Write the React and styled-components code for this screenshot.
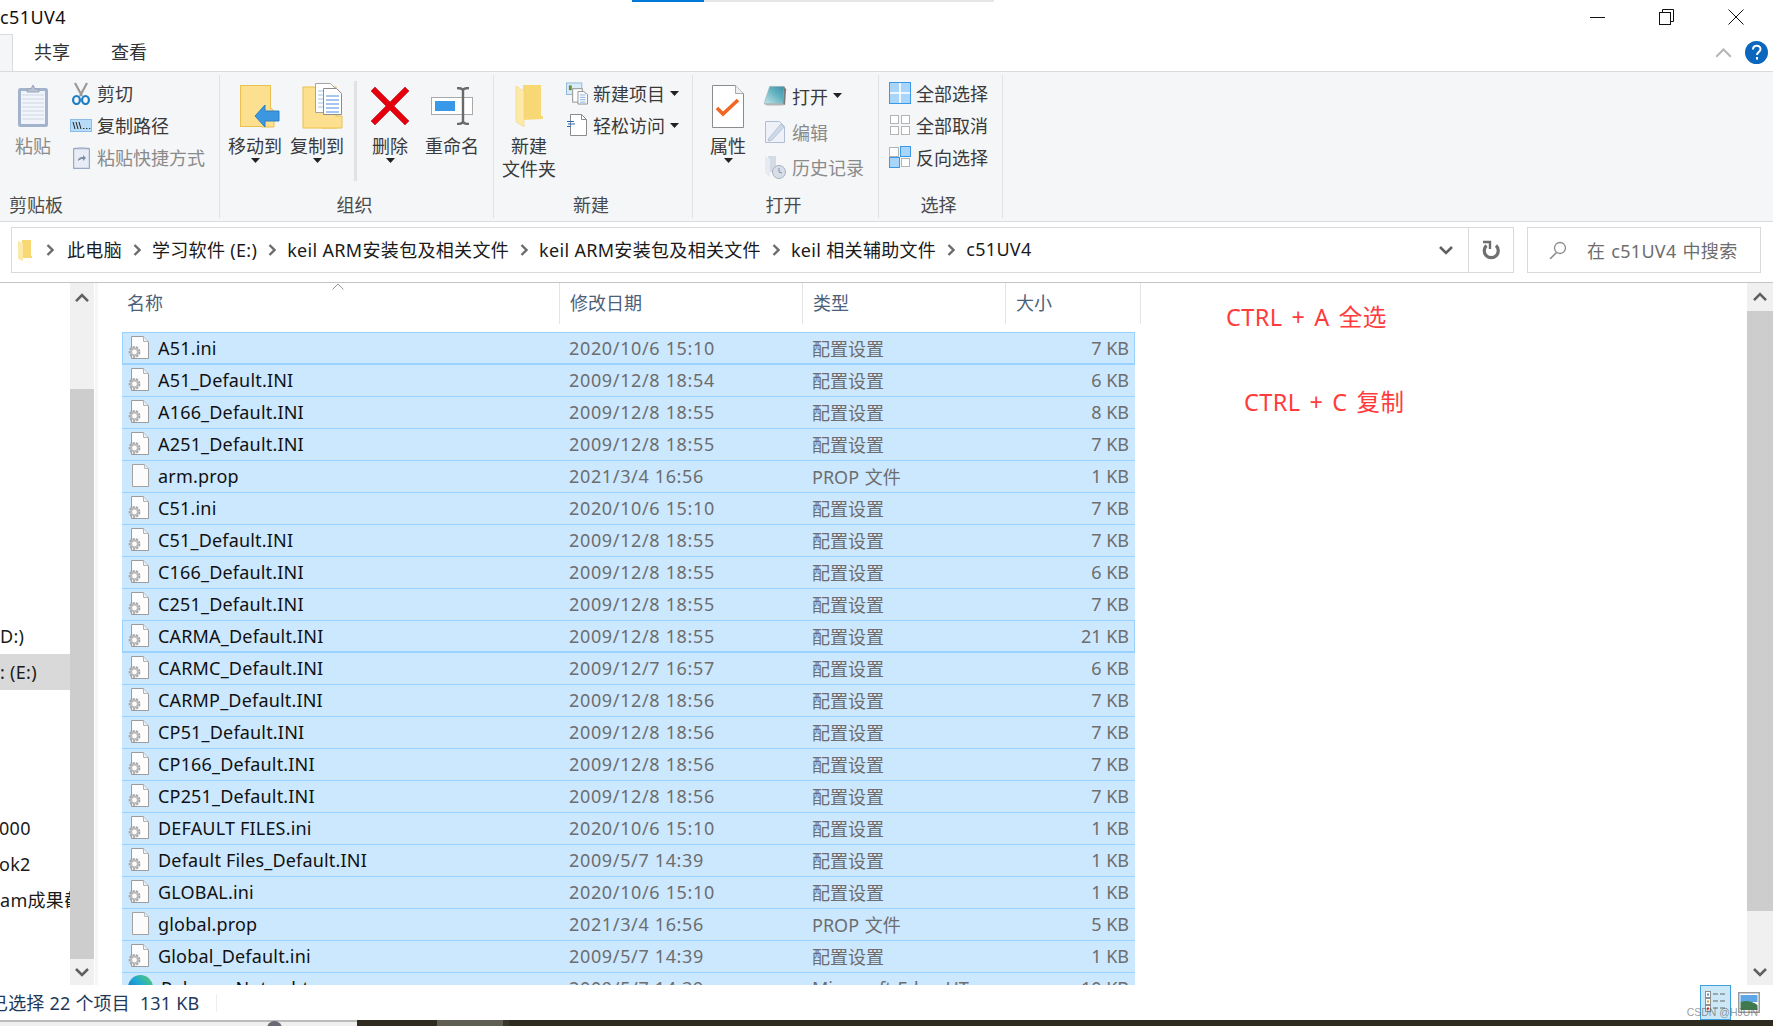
import React from 'react';
import styled, { createGlobalStyle } from 'styled-components';

const GlobalStyle = createGlobalStyle`
    html, body {
        margin: 0;
        padding: 0;
        background: #fff;
    }
    body {
        font-family: "Noto Sans", "Noto Sans CJK SC", sans-serif;
        font-size: 18px;
        color: #222;
    }
`;

const Page = styled.div`
    width: 1773px;
    height: 1026px;
    overflow: hidden;
    display: flex;
    flex-direction: column;
    position: relative;
    background: #fff;
`;

/* title bar */
const TitleBar = styled.div`
    height: 34px;
    display: flex;
    align-items: center;
    flex-shrink: 0;
`;
const TitleText = styled.div`
    font-size: 18px;
    color: #111;
    letter-spacing: 0.4px;
`;
const Progress = styled.div`
    position: absolute;
    top: 0;
    left: 632px;
    width: 362px;
    height: 2px;
    background: linear-gradient(to right, #0078d7 72px, #e6e6e6 72px);
`;
const WindowControls = styled.div`
    margin-left: auto;
    padding-right: 3px;
    display: flex;
`;
const WindowButton = styled.div`
    width: 69px;
    height: 34px;
    display: flex;
    align-items: center;
    justify-content: center;
`;

/* tabs */
const TabRow = styled.div`
    height: 38px;
    display: flex;
    align-items: center;
    flex-shrink: 0;
    border-bottom: 1px solid #dadbdc;
    box-sizing: border-box;
`;
const FileTab = styled.div`
    width: 13px;
    height: 37px;
    box-sizing: border-box;
    background: #f5f6f7;
    border-top: 1px solid #dadbdc;
    border-right: 1px solid #dadbdc;
`;
const Tab = styled.div`
    margin-left: ${(p) => p.$left}px;
    margin-top: -4px;
    color: #333;
`;
const TabTools = styled.div`
    margin-left: auto;
    padding-right: 5px;
    display: flex;
    align-items: center;
    gap: 13px;
`;

/* ribbon */
const Ribbon = styled.div`
    height: 150px;
    flex-shrink: 0;
    display: flex;
    background: #f5f6f7;
    border-bottom: 1px solid #dadbdc;
    box-sizing: border-box;
    padding-top: 3px;
`;
const Group = styled.div`
    width: ${(p) => p.$w}px;
    height: 143px;
    box-sizing: border-box;
    border-right: 1px solid #e1e2e3;
    display: flex;
    flex-direction: column;
`;
const GroupBody = styled.div`
    height: 117px;
    padding-top: 2px;
    padding-left: ${(p) => p.$pad || 0}px;
    box-sizing: border-box;
    display: flex;
`;
const GroupLabel = styled.div`
    height: 26px;
    line-height: 26px;
    color: #4a4a4a;
    text-align: ${(p) => (p.$start ? 'left' : 'center')};
    padding-left: ${(p) => (p.$start ? 9 : 0)}px;
    padding-right: ${(p) => (p.$start ? 0 : 4)}px;
`;
const LargeButton = styled.div`
    width: ${(p) => p.$w || 54}px;
    margin-left: ${(p) => p.$left || 0}px;
    display: flex;
    flex-direction: column;
    align-items: center;
    flex-shrink: 0;
`;
const LargeIcon = styled.div`
    height: 58px;
    padding-left: ${(p) => p.$nudge || 0}px;
    display: flex;
    align-items: center;
    justify-content: center;
`;
const LargeLabel = styled.div`
    line-height: 23px;
    text-align: center;
    color: ${(p) => (p.$off ? '#8a8a8a' : '#3a3a3a')};
    white-space: pre-line;
`;
const CaretBox = styled.div`
    height: 6px;
    display: flex;
    justify-content: center;
`;
const Separator = styled.div`
    width: 3px;
    height: 100px;
    margin: 4px 0 0 ${(p) => p.$left}px;
    background: #e1e2e3;
    flex-shrink: 0;
`;
const SmallColumn = styled.div`
    margin-left: ${(p) => p.$left || 0}px;
    display: flex;
    flex-direction: column;
`;
const SmallRow = styled.div`
    height: ${(p) => p.$h || 32}px;
    display: flex;
    align-items: center;
    gap: 5px;
    color: ${(p) => (p.$off ? '#8a8a8a' : '#3a3a3a')};
    white-space: nowrap;
`;
const SmallIcon = styled.div`
    width: ${(p) => p.$w || 22}px;
    display: flex;
    justify-content: center;
    align-items: center;
`;
const InlineCaret = styled.div`
    margin-left: 0;
    display: flex;
`;

/* address row */
const AddressRow = styled.div`
    height: 61px;
    flex-shrink: 0;
    box-sizing: border-box;
    padding: 5px 12px 9px 11px;
    display: flex;
    gap: 13px;
    border-bottom: 1px solid #c4c4c4;
`;
const AddressBox = styled.div`
    flex: 1;
    display: flex;
    align-items: center;
    border: 1px solid #d9d9d9;
    padding-left: 6px;
    min-width: 0;
`;
const CrumbSep = styled.div`
    width: ${(p) => p.$w || 30}px;
    display: flex;
    justify-content: center;
    flex-shrink: 0;
`;
const Crumb = styled.div`
    white-space: nowrap;
    color: #1a1a1a;
    margin-top: -2px;
    letter-spacing: 0.32px;
`;
const HistoryDrop = styled.div`
    margin-left: auto;
    width: 44px;
    display: flex;
    justify-content: center;
`;
const RefreshBox = styled.div`
    width: 45px;
    box-sizing: border-box;
    align-self: stretch;
    border-left: 1px solid #d9d9d9;
    display: flex;
    align-items: center;
    justify-content: center;
`;
const SearchBox = styled.div`
    width: 234px;
    flex-shrink: 0;
    box-sizing: border-box;
    border: 1px solid #d9d9d9;
    padding-left: 21px;
    display: flex;
    align-items: center;
    gap: 20px;
    color: #6d6d6d;
    white-space: nowrap;
    letter-spacing: 0.3px;
    word-spacing: 1px;
`;

/* main part */
const Main = styled.div`
    height: 702px;
    flex-shrink: 0;
    display: flex;
    overflow: hidden;
`;
const Nav = styled.div`
    width: 70px;
    flex-shrink: 0;
    overflow: hidden;
    display: flex;
    flex-direction: column;
    padding-top: 335px;
    box-sizing: border-box;
`;
const NavItem = styled.div`
    height: 36px;
    line-height: 36px;
    white-space: nowrap;
    overflow: hidden;
    color: #1a1a1a;
    letter-spacing: 0.3px;
    text-indent: ${(p) => p.$shift || 0}px;
    background: ${(p) => (p.$on ? '#d9d9d9' : 'transparent')};
    margin-top: ${(p) => p.$top || 0}px;
`;
const Scrollbar = styled.div`
    width: ${(p) => p.$w}px;
    flex-shrink: 0;
    background: #f0f0f0;
    display: flex;
    flex-direction: column;
`;
const ScrollArrow = styled.div`
    height: ${(p) => p.$h}px;
    display: flex;
    align-items: center;
    justify-content: center;
    flex-shrink: 0;
`;
const ScrollEnd = styled(ScrollArrow)`
    align-items: flex-end;
    padding-bottom: 8px;
    box-sizing: border-box;
`;
const ScrollThumb = styled.div`
    background: #cdcdcd;
    height: ${(p) => p.$h}px;
    margin-top: ${(p) => p.$top || 0}px;
    flex-shrink: 0;
`;
const NavGap = styled.div`
    width: 4px;
    flex-shrink: 0;
    background: linear-gradient(to right, #fff 1px, #f6f6f6 1px);
`;
const ListPane = styled.div`
    flex: 1;
    position: relative;
    overflow: hidden;
    padding-left: 24px;
`;
const HeaderRow = styled.div`
    height: 39px;
    width: 1019px;
    display: grid;
    grid-template-columns: 438px 243px 203px 135px;
    color: #4c607a;
    margin-bottom: 10px;
`;
const HeaderCell = styled.div`
    border-right: 1px solid #e5e5e5;
    padding-left: ${(p) => p.$pad}px;
    line-height: 41px;
    box-sizing: border-box;
`;
const SortMark = styled.div`
    position: absolute;
    left: 234px;
    top: 0;
    display: flex;
`;
const FileRow = styled.div`
    height: 32px;
    width: 1013px;
    box-sizing: border-box;
    padding-bottom: 2px;
    display: grid;
    grid-template-columns: 437px 243px 203px 130px;
    align-items: center;
    background: #cce8ff;
    border-top: 1px solid #99d1ff;
    ${(p) => p.$focus && 'outline: 1px solid #99d1ff; outline-offset: -1px;'}
    color: #6d6d6d;
`;
const NameCell = styled.div`
    display: flex;
    align-items: center;
    gap: 8px;
    padding-left: 6px;
    color: #111;
    white-space: nowrap;
    letter-spacing: 0.18px;
`;
const MetaCell = styled.div`
    padding-left: 10px;
    white-space: nowrap;
    word-spacing: 1px;
`;
const DateCell = styled(MetaCell)`
    letter-spacing: 0.65px;
    word-spacing: 0;
`;
const SizeCell = styled.div`
    text-align: right;
    padding-right: 6px;
`;
const Note = styled.div`
    position: absolute;
    left: ${(p) => p.$x}px;
    top: ${(p) => p.$y}px;
    color: #ff3b3b;
    font-size: 23.5px;
    line-height: 32px;
    white-space: nowrap;
    letter-spacing: 0.4px;
    word-spacing: 2.5px;
`;

/* status bar */
const StatusBar = styled.div`
    height: 35px;
    flex-shrink: 0;
    display: flex;
    align-items: center;
    position: relative;
    color: #1e395b;
`;
const StatusText = styled.div`
    margin-left: -10px;
    white-space: pre;
    width: 226px;
    flex-shrink: 0;
    letter-spacing: 0.15px;
    word-spacing: 0.2px;
    margin-top: -2px;
`;
const StatusDivider = styled.div`
    width: 1px;
    height: 18px;
    background: #eeeeee;
`;
const ViewButtons = styled.div`
    margin-left: auto;
    margin-right: 13px;
    display: flex;
    align-items: center;
    gap: 7px;
    align-self: stretch;
`;
const ViewButton = styled.div`
    width: ${(p) => p.$w}px;
    box-sizing: border-box;
    align-self: stretch;
    display: flex;
    align-items: center;
    justify-content: center;
    ${(p) => p.$on && 'background: #cce8f7; border: 1px solid #3ea0e0;'}
`;
const Watermark = styled.div`
    position: absolute;
    right: 15px;
    bottom: 0;
    font-family: "Liberation Sans", sans-serif;
    font-size: 10.5px;
    line-height: 16px;
    color: rgba(90, 90, 90, 0.62);
    white-space: nowrap;
`;

/* strip of what lies behind the window */
const BackStrip = styled.div`
    height: 6px;
    flex-shrink: 0;
    display: flex;
    background: #2e2b20;
`;
const StripLight = styled.div`
    width: 357px;
    box-sizing: border-box;
    border-top: 2px solid #bcbcbc;
    background: #efefef;
    position: relative;
`;
const StripDot = styled.div`
    position: absolute;
    left: 267px;
    top: -1px;
    width: 15px;
    height: 15px;
    border-radius: 50%;
    background: #6b6873;
`;
const StripPart = styled.div`
    width: ${(p) => p.$w}px;
    background: ${(p) => p.$c};
`;

/* small drawings */
const Caret = () => (
    <svg width="9" height="5" viewBox="0 0 9 5"><path d="M0 0h9L4.5 5z" fill="#222" /></svg>
);

const Chevron = ({ color = '#6b6b6b' }) => (
    <svg width="8" height="12" viewBox="0 0 8 12">
        <path d="M1.5 1l5 5-5 5" fill="none" stroke={color} strokeWidth="2.4" />
    </svg>
);

const UpChevron = ({ w = 14, color = '#606060', sw = 2.6 }) => (
    <svg width={w} height={w * 0.65} viewBox="0 0 14 9">
        <path d="M1 8l6-6 6 6" fill="none" stroke={color} strokeWidth={sw} />
    </svg>
);

const DownChevron = () => (
    <svg width="14" height="9" viewBox="0 0 14 9">
        <path d="M1 1l6 6 6-6" fill="none" stroke="#606060" strokeWidth="2.6" />
    </svg>
);

const ClipboardIcon = () => (
    <svg width="32" height="44" viewBox="0 0 32 44">
        <rect x="1" y="4" width="30" height="39" rx="2.5" fill="#a3b3cc" />
        <rect x="4" y="7" width="24" height="33" fill="#f1f4fa" />
        {[11, 15, 19, 23, 27, 31, 35].map((y) => (
            <path key={y} d={`M5 ${y}h22`} stroke="#cfd7e6" strokeWidth="1" />
        ))}
        <path d="M10 8V5h4l2-4 2 4h4v3z" fill="#b9c3d4" stroke="#99a5ba" />
    </svg>
);

const ScissorsIcon = () => (
    <svg width="18" height="23" viewBox="0 0 18 23">
        <path d="M3 1l7 13M15 1L8 14" stroke="#9a9a9a" strokeWidth="2.2" fill="none" />
        <ellipse cx="4.5" cy="18" rx="3.4" ry="4" fill="none" stroke="#1c7cc4" strokeWidth="2.2" />
        <ellipse cx="13.5" cy="18" rx="3.4" ry="4" fill="none" stroke="#1c7cc4" strokeWidth="2.2" />
    </svg>
);

const CopyPathIcon = () => (
    <svg width="22" height="13" viewBox="0 0 22 13">
        <rect x="0.5" y="0.5" width="21" height="12" fill="#b6dcf8" stroke="#8dbde6" />
        <path d="M3 3l2 7M6 3l2 7M9 3l2 7" stroke="#222" strokeWidth="1" />
        <path d="M13 9.5h1.4M16 9.5h1.4M19 9.5h1.2" stroke="#333" strokeWidth="1.2" />
    </svg>
);

const PasteShortcutIcon = () => (
    <svg width="17" height="23" viewBox="0 0 17 23">
        <rect x="0.5" y="2.5" width="16" height="20" rx="1" fill="#e8edf5" stroke="#9aa9c2" strokeWidth="1.4" />
        <path d="M5 3V1.5h7V3z" fill="#a9b5c9" />
        <path d="M5 15c0-3 2-4 5-4V9l3 3-3 3v-2c-2 0-3 .6-5 2z" fill="#7e8ba3" />
    </svg>
);

const MoveToIcon = () => (
    <svg width="40" height="43" viewBox="0 0 40 43">
        <rect x="0.5" y="0.5" width="30" height="41" fill="#fde08f" stroke="#eac04e" />
        <path d="M31 23l3 3v16H22" fill="#fde08f" stroke="#eac04e" />
        <path d="M15 31l10-11v6h14v10H25v6z" fill="#3b97e0" stroke="#2b7fc4" />
    </svg>
);

const CopyToIcon = () => (
    <svg width="41" height="46" viewBox="0 0 41 46">
        <rect x="1" y="4" width="33" height="41" fill="#fde08f" stroke="#eac04e" />
        <path d="M34 33h6v12H20" fill="#fde08f" stroke="#eac04e" />
        <path d="M13.5 0.5h15l5 5v24h-20z" fill="#fff" stroke="#a5a5a5" />
        <path d="M16 8h11M16 12h11M16 16h11M16 20h11M16 24h11" stroke="#9cc1ea" />
        <path d="M21.5 5.5h13l5 5v21h-18z" fill="#fff" stroke="#8c8c8c" />
        <path d="M24 13h13M24 17h13M24 21h13M24 25h13M24 29h13" stroke="#4f8ee0" />
    </svg>
);

const DeleteIcon = () => (
    <svg width="38" height="38" viewBox="0 0 38 38">
        <path d="M4 0L19 15 34 0l4 4-15 15 15 15-4 4-15-15L4 38l-4-4 15-15L0 4z" fill="#e6000d" stroke="#b0161d" strokeWidth="0.6" />
    </svg>
);

const RenameIcon = () => (
    <svg width="42" height="38" viewBox="0 0 42 38">
        <rect x="0.5" y="10.5" width="41" height="17" fill="#fff" stroke="#a9a9a9" />
        <rect x="4" y="14" width="20" height="10" fill="#3a98e8" />
        <path d="M32 3v32M26 1c4 0 6 1 6 3 0-2 2-3 6-3M26 37c4 0 6-1 6-3 0 2 2 3 6 3" fill="none" stroke="#6a6a6a" strokeWidth="2.4" />
    </svg>
);

const NewFolderIcon = () => (
    <svg width="28" height="42" viewBox="0 0 28 42">
        <path d="M8 0h18v31h2v3l-20 1z" fill="#f8d775" />
        <path d="M1 1l8 5v36l-8-5z" fill="#fde9a8" stroke="#efd58a" strokeWidth="0.6" />
    </svg>
);

const AddressFolderIcon = () => (
    <svg width="14" height="21" viewBox="0 0 14 21">
        <path d="M4 0h9v16h1v2H4z" fill="#f8d775" />
        <path d="M0 1l5 2v18l-5-2z" fill="#fde9a8" />
    </svg>
);

const NewItemIcon = () => (
    <svg width="23" height="23" viewBox="0 0 23 23">
        <rect x="0.5" y="0.5" width="16" height="12" fill="#d8ecfa" stroke="#8fb6d6" />
        <rect x="3" y="3" width="3" height="5" fill="#6d8a3c" />
        <rect x="7" y="6.5" width="10" height="14" fill="#fff" stroke="#8f8f8f" />
        <path d="M12.5 9.5h6l4 3v10h-10z" fill="#fff" stroke="#8f8f8f" />
        <path d="M14.5 13h6M14.5 15.5h6M14.5 18h6M14.5 20.5h6" stroke="#7cb0e4" />
    </svg>
);

const EasyAccessIcon = () => (
    <svg width="20" height="22" viewBox="0 0 20 22">
        <path d="M3.5 0.5h11l5 5v16h-16z" fill="#fff" stroke="#8c8c8c" />
        <path d="M14.5 0.5v5h5" fill="none" stroke="#8c8c8c" />
        <path d="M0 7.5h7M1 10h7M0 12.5h4" stroke="#2a6ab0" />
    </svg>
);

const PropertiesIcon = () => (
    <svg width="32" height="43" viewBox="0 0 32 43">
        <path d="M0.5 0.5h23l8 8v34h-31z" fill="#fff" stroke="#8c8c8c" />
        <path d="M23.5 0.5v8h8" fill="#eee" stroke="#aaa" />
        <path d="M5 23l6 6L26 15" fill="none" stroke="#f26522" strokeWidth="3.6" />
    </svg>
);

const NotepadIcon = () => (
    <svg width="24" height="22" viewBox="0 0 24 22">
        <defs>
            <linearGradient id="padFill" x1="0" y1="1" x2="1" y2="0">
                <stop offset="0" stopColor="#c8e6ea" />
                <stop offset="0.6" stopColor="#5fb0bf" />
                <stop offset="1" stopColor="#3f8fa3" />
            </linearGradient>
        </defs>
        <path d="M6 1h15l-1 18H0z" fill="url(#padFill)" stroke="#8fa9ad" strokeWidth="0.6" />
        <path d="M21 1l2 3-1 16h-2z" fill="#7a7a7a" />
        <path d="M0 19h20v2H3z" fill="#b5b5b5" />
    </svg>
);

const EditIcon = () => (
    <svg width="21" height="23" viewBox="0 0 21 23">
        <path d="M0.5 1.5h14l5 5v16h-19z" fill="#eef2f8" stroke="#b0bfd6" />
        <path d="M4 18L16 4l3 3L7 20l-4 1z" fill="#cdd8e8" stroke="#a9b8cf" strokeWidth="0.7" />
    </svg>
);

const HistoryIcon = () => (
    <svg width="23" height="23" viewBox="0 0 23 23">
        <path d="M4 0h8v16H5z" fill="#d4dbe6" />
        <path d="M1 0l5 3v18l-5-4z" fill="#e6ebf2" />
        <circle cx="15" cy="16" r="6.5" fill="#d8dee8" stroke="#a7b1c1" />
        <path d="M15 12v4l3 1" fill="none" stroke="#8590a3" />
    </svg>
);

const SelectAllIcon = () => (
    <svg width="22" height="22" viewBox="0 0 22 22">
        <rect x="0.5" y="0.5" width="21" height="21" fill="#a9d5fb" stroke="#3a98e8" />
        <path d="M11 0v22M0 11h22" stroke="#fff" strokeWidth="1.6" />
        <rect x="0.5" y="0.5" width="21" height="21" fill="none" stroke="#3a98e8" />
    </svg>
);

const SelectNoneIcon = () => (
    <svg width="20" height="20" viewBox="0 0 20 20">
        <g fill="#fff" stroke="#b4b4b4">
            <rect x="0.5" y="0.5" width="8" height="8" />
            <rect x="11.5" y="0.5" width="8" height="8" />
            <rect x="0.5" y="11.5" width="8" height="8" />
            <rect x="11.5" y="11.5" width="8" height="8" />
        </g>
    </svg>
);

const InvertIcon = () => (
    <svg width="22" height="22" viewBox="0 0 22 22">
        <rect x="0.5" y="1.5" width="9" height="9" fill="#fff" stroke="#b4b4b4" />
        <rect x="11.5" y="0.5" width="10" height="10" fill="#a9d5fb" stroke="#3a98e8" />
        <rect x="0.5" y="11.5" width="10" height="10" fill="#a9d5fb" stroke="#3a98e8" />
        <rect x="12.5" y="12.5" width="8" height="8" fill="#fff" stroke="#b4b4b4" />
    </svg>
);

const RefreshIcon = () => (
    <svg width="18" height="21" viewBox="0 0 18 21">
        <path d="M4.5 5.5a7 7 0 1 0 9.5 0" fill="none" stroke="#6f6f6f" strokeWidth="3.2" />
        <path d="M1 2h7v7" fill="none" stroke="#6f6f6f" strokeWidth="2.4" />
    </svg>
);

const SearchIcon = () => (
    <svg width="18" height="18" viewBox="0 0 18 18">
        <circle cx="11" cy="7" r="5.5" fill="none" stroke="#8a8a8a" strokeWidth="1.3" />
        <path d="M7.5 11.5L1 18" stroke="#8a8a8a" strokeWidth="1.5" />
    </svg>
);

const IniIcon = () => (
    <svg width="22" height="24" viewBox="0 0 22 24">
        <path d="M3.5 0.5h12l5 5v17h-17z" fill="#fdfdfd" stroke="#9c9c9c" />
        <path d="M15.5 0.5v5h5" fill="#eee" stroke="#b4b4b4" />
        <circle cx="6.5" cy="16" r="4.6" fill="none" stroke="#a7a7a7" strokeWidth="2.6" strokeDasharray="2.2 1" />
        <circle cx="6.5" cy="16" r="3.4" fill="none" stroke="#b9b9b9" strokeWidth="2" />
    </svg>
);

const BlankIcon = () => (
    <svg width="22" height="24" viewBox="0 0 22 24">
        <path d="M4.5 0.5h12l4 4v18h-16z" fill="#fbfbfb" stroke="#a2a2a2" />
        <path d="M16.5 0.5v4h4" fill="#eee" stroke="#bcbcbc" />
    </svg>
);

const EdgeIcon = () => (
    <svg width="25" height="25" viewBox="0 0 25 25">
        <defs>
            <linearGradient id="edgeFill" x1="0" y1="1" x2="1" y2="0">
                <stop offset="0" stopColor="#0c59a4" />
                <stop offset="0.55" stopColor="#1fa9d8" />
                <stop offset="1" stopColor="#5ed05a" />
            </linearGradient>
        </defs>
        <circle cx="12.5" cy="12.5" r="12.5" fill="url(#edgeFill)" />
    </svg>
);

const DetailsViewIcon = () => (
    <svg width="21" height="24" viewBox="0 0 21 24">
        <g stroke="#8f8f8f" fill="#fff">
            <rect x="0.5" y="0.5" width="5" height="6" />
            <rect x="0.5" y="7.5" width="5" height="6" />
            <rect x="0.5" y="14.5" width="5" height="6" />
        </g>
        <rect x="2" y="2.5" width="2" height="2" fill="#4c8fc9" />
        <rect x="2" y="9.5" width="2" height="2" fill="#c9a044" />
        <rect x="2" y="16.5" width="2" height="2" fill="#c8271e" />
        <path d="M8 3h5M15 3h5M8 10h5M15 10h5M8 17h5M15 17h5" stroke="#666" />
    </svg>
);

const PreviewViewIcon = () => (
    <svg width="22" height="21" viewBox="0 0 22 21">
        <rect x="0.75" y="0.75" width="20.5" height="19.5" fill="#fff" stroke="#9a9a9a" strokeWidth="1.5" />
        <rect x="2.5" y="3" width="17" height="7" fill="#5fa6e6" />
        <path d="M2.5 10c6-2 11-1 17 3v5h-17z" fill="#3f7a4f" />
    </svg>
);

const WinMinimize = () => (
    <svg width="15" height="3" viewBox="0 0 15 3"><path d="M0 1.5h15" stroke="#111" /></svg>
);
const WinRestore = () => (
    <svg width="15" height="16" viewBox="0 0 15 16">
        <path d="M3.5 3V0.5h11v12H12" fill="none" stroke="#111" />
        <rect x="0.5" y="3.5" width="11" height="12" fill="#fff" stroke="#111" />
    </svg>
);
const WinClose = () => (
    <svg width="16" height="16" viewBox="0 0 16 16"><path d="M0.5 0.5l15 15M15.5 0.5l-15 15" stroke="#111" /></svg>
);

const HelpIcon = () => (
    <svg width="23" height="23" viewBox="0 0 23 23">
        <circle cx="11.5" cy="11.5" r="11.5" fill="#0b66bd" />
        <path d="M8 8.5c0-5 7.5-5 7.5-.5 0 3-3.5 3-3.5 6" fill="none" stroke="#fff" strokeWidth="2" />
        <rect x="11" y="16" width="2" height="2.6" fill="#fff" />
    </svg>
);

const SortUp = () => (
    <svg width="12" height="7" viewBox="0 0 12 7"><path d="M0.5 6.5L6 1l5.5 5.5" fill="none" stroke="#999" /></svg>
);

const date1 = '2009/12/8 ';
const iniType = '配置设置';

const files = [
    ['A51.ini', '2020/10/6 15:10', iniType, '7 KB', 'ini'],
    ['A51_Default.INI', date1 + '18:54', iniType, '6 KB', 'ini'],
    ['A166_Default.INI', date1 + '18:55', iniType, '8 KB', 'ini'],
    ['A251_Default.INI', date1 + '18:55', iniType, '7 KB', 'ini'],
    ['arm.prop', '2021/3/4 16:56', 'PROP 文件', '1 KB', 'blank'],
    ['C51.ini', '2020/10/6 15:10', iniType, '7 KB', 'ini'],
    ['C51_Default.INI', date1 + '18:55', iniType, '7 KB', 'ini'],
    ['C166_Default.INI', date1 + '18:55', iniType, '6 KB', 'ini'],
    ['C251_Default.INI', date1 + '18:55', iniType, '7 KB', 'ini'],
    ['CARMA_Default.INI', date1 + '18:55', iniType, '21 KB', 'ini'],
    ['CARMC_Default.INI', '2009/12/7 16:57', iniType, '6 KB', 'ini'],
    ['CARMP_Default.INI', date1 + '18:56', iniType, '7 KB', 'ini'],
    ['CP51_Default.INI', date1 + '18:56', iniType, '7 KB', 'ini'],
    ['CP166_Default.INI', date1 + '18:56', iniType, '7 KB', 'ini'],
    ['CP251_Default.INI', date1 + '18:56', iniType, '7 KB', 'ini'],
    ['DEFAULT FILES.ini', '2020/10/6 15:10', iniType, '1 KB', 'ini'],
    ['Default Files_Default.INI', '2009/5/7 14:39', iniType, '1 KB', 'ini'],
    ['GLOBAL.ini', '2020/10/6 15:10', iniType, '1 KB', 'ini'],
    ['global.prop', '2021/3/4 16:56', 'PROP 文件', '5 KB', 'blank'],
    ['Global_Default.ini', '2009/5/7 14:39', iniType, '1 KB', 'ini'],
    ['Release_Notes.htm', '2009/5/7 14:39', 'Microsoft Edge HT', '10 KB', 'edge'],
];

const crumbs = ['此电脑', '学习软件 (E:)', 'keil ARM安装包及相关文件', 'keil ARM安装包及相关文件', 'keil 相关辅助文件', 'c51UV4'];

const fileIcons = { ini: <IniIcon />, blank: <BlankIcon />, edge: <EdgeIcon /> };

const App = () => {
    return (
        <Page>
            <GlobalStyle />
            <Progress />
            <TitleBar>
                <TitleText>c51UV4</TitleText>
                <WindowControls>
                    <WindowButton><WinMinimize /></WindowButton>
                    <WindowButton><WinRestore /></WindowButton>
                    <WindowButton><WinClose /></WindowButton>
                </WindowControls>
            </TitleBar>

            <TabRow>
                <FileTab />
                <Tab $left={21}>共享</Tab>
                <Tab $left={41}>查看</Tab>
                <TabTools>
                    <UpChevron w={17} color="#b5b5b5" sw={1.6} />
                    <HelpIcon />
                </TabTools>
            </TabRow>

            <Ribbon>
                <Group $w={220}>
                    <GroupBody>
                        <LargeButton $w={66}>
                            <LargeIcon><ClipboardIcon /></LargeIcon>
                            <LargeLabel $off>粘贴</LargeLabel>
                        </LargeButton>
                        <SmallColumn $left={4}>
                            <SmallRow><SmallIcon><ScissorsIcon /></SmallIcon>剪切</SmallRow>
                            <SmallRow><SmallIcon><CopyPathIcon /></SmallIcon>复制路径</SmallRow>
                            <SmallRow $off><SmallIcon><PasteShortcutIcon /></SmallIcon>粘贴快捷方式</SmallRow>
                        </SmallColumn>
                    </GroupBody>
                    <GroupLabel $start>剪贴板</GroupLabel>
                </Group>

                <Group $w={274}>
                    <GroupBody $pad={8}>
                        <LargeButton>
                            <LargeIcon $nudge={9}><MoveToIcon /></LargeIcon>
                            <LargeLabel>移动到</LargeLabel>
                            <CaretBox><Caret /></CaretBox>
                        </LargeButton>
                        <LargeButton $left={8}>
                            <LargeIcon $nudge={10}><CopyToIcon /></LargeIcon>
                            <LargeLabel>复制到</LargeLabel>
                            <CaretBox><Caret /></CaretBox>
                        </LargeButton>
                        <Separator $left={10} />
                        <LargeButton $left={6}>
                            <LargeIcon><DeleteIcon /></LargeIcon>
                            <LargeLabel>删除</LargeLabel>
                            <CaretBox><Caret /></CaretBox>
                        </LargeButton>
                        <LargeButton $left={8}>
                            <LargeIcon><RenameIcon /></LargeIcon>
                            <LargeLabel>重命名</LargeLabel>
                        </LargeButton>
                    </GroupBody>
                    <GroupLabel>组织</GroupLabel>
                </Group>

                <Group $w={199}>
                    <GroupBody $pad={8}>
                        <LargeButton>
                            <LargeIcon><NewFolderIcon /></LargeIcon>
                            <LargeLabel>{'新建\n文件夹'}</LargeLabel>
                        </LargeButton>
                        <SmallColumn $left={10}>
                            <SmallRow>
                                <SmallIcon><NewItemIcon /></SmallIcon>新建项目
                                <InlineCaret><Caret /></InlineCaret>
                            </SmallRow>
                            <SmallRow>
                                <SmallIcon><EasyAccessIcon /></SmallIcon>轻松访问
                                <InlineCaret><Caret /></InlineCaret>
                            </SmallRow>
                        </SmallColumn>
                    </GroupBody>
                    <GroupLabel>新建</GroupLabel>
                </Group>

                <Group $w={186}>
                    <GroupBody $pad={8}>
                        <LargeButton>
                            <LargeIcon><PropertiesIcon /></LargeIcon>
                            <LargeLabel>属性</LargeLabel>
                            <CaretBox><Caret /></CaretBox>
                        </LargeButton>
                        <SmallColumn $left={9}>
                            <SmallRow $h={37}>
                                <SmallIcon $w={23}><NotepadIcon /></SmallIcon>打开
                                <InlineCaret><Caret /></InlineCaret>
                            </SmallRow>
                            <SmallRow $h={35} $off><SmallIcon $w={23}><EditIcon /></SmallIcon>编辑</SmallRow>
                            <SmallRow $h={36} $off><SmallIcon $w={23}><HistoryIcon /></SmallIcon>历史记录</SmallRow>
                        </SmallColumn>
                    </GroupBody>
                    <GroupLabel>打开</GroupLabel>
                </Group>

                <Group $w={124}>
                    <GroupBody $pad={10}>
                        <SmallColumn>
                            <SmallRow><SmallIcon><SelectAllIcon /></SmallIcon>全部选择</SmallRow>
                            <SmallRow><SmallIcon><SelectNoneIcon /></SmallIcon>全部取消</SmallRow>
                            <SmallRow><SmallIcon><InvertIcon /></SmallIcon>反向选择</SmallRow>
                        </SmallColumn>
                    </GroupBody>
                    <GroupLabel>选择</GroupLabel>
                </Group>
            </Ribbon>

            <AddressRow>
                <AddressBox>
                    <AddressFolderIcon />
                    <CrumbSep $w={35}><Chevron /></CrumbSep>
                    {crumbs.map((c, i) => (
                        <React.Fragment key={i}>
                            <Crumb>{c}</Crumb>
                            {i < crumbs.length - 1 && <CrumbSep><Chevron /></CrumbSep>}
                        </React.Fragment>
                    ))}
                    <HistoryDrop><DownChevron /></HistoryDrop>
                    <RefreshBox><RefreshIcon /></RefreshBox>
                </AddressBox>
                <SearchBox>
                    <SearchIcon />
                    在 c51UV4 中搜索
                </SearchBox>
            </AddressRow>

            <Main>
                <Nav>
                    <NavItem>D:)</NavItem>
                    <NavItem $on>: (E:)</NavItem>
                    <NavItem $top={120} $shift={-1}>000</NavItem>
                    <NavItem $shift={-1}>ok2</NavItem>
                    <NavItem>am成果截图</NavItem>
                </Nav>
                <Scrollbar $w={24}>
                    <ScrollArrow $h={30}><UpChevron /></ScrollArrow>
                    <ScrollThumb $top={76} $h={570} />
                    <ScrollArrow $h={26}><DownChevron /></ScrollArrow>
                </Scrollbar>
                <NavGap />
                <ListPane>
                    <SortMark><SortUp /></SortMark>
                    <HeaderRow>
                        <HeaderCell $pad={5}>名称</HeaderCell>
                        <HeaderCell $pad={10}>修改日期</HeaderCell>
                        <HeaderCell $pad={10}>类型</HeaderCell>
                        <HeaderCell $pad={10}>大小</HeaderCell>
                    </HeaderRow>
                    {files.map((f, i) => (
                        <FileRow key={f[0]} $focus={i === 0 || i === 9}>
                            <NameCell>{fileIcons[f[4]]}{f[0]}</NameCell>
                            <DateCell>{f[1]}</DateCell>
                            <MetaCell>{f[2]}</MetaCell>
                            <SizeCell>{f[3]}</SizeCell>
                        </FileRow>
                    ))}
                    <Note $x={1128} $y={18}>CTRL + A 全选</Note>
                    <Note $x={1146} $y={103}>CTRL + C 复制</Note>
                </ListPane>
                <Scrollbar $w={26}>
                    <ScrollArrow $h={28}><UpChevron /></ScrollArrow>
                    <ScrollThumb $h={600} />
                    <ScrollEnd $h={74}><DownChevron /></ScrollEnd>
                </Scrollbar>
            </Main>

            <StatusBar>
                <StatusText>已选择 22 个项目  131 KB</StatusText>
                <StatusDivider />
                <ViewButtons>
                    <ViewButton $w={31} $on><DetailsViewIcon /></ViewButton>
                    <ViewButton $w={22}><PreviewViewIcon /></ViewButton>
                </ViewButtons>
                <Watermark>CSDN @HJUN</Watermark>
            </StatusBar>

            <BackStrip>
                <StripLight><StripDot /></StripLight>
                <StripPart $w={80} $c="#2f2c1f" />
                <StripPart $w={66} $c="#5e5f52" />
                <StripPart $w={6} $c="#39362d" />
                <StripPart $w={1264} $c="#2e2b20" />
            </BackStrip>
        </Page>
    );
};

export default App;
